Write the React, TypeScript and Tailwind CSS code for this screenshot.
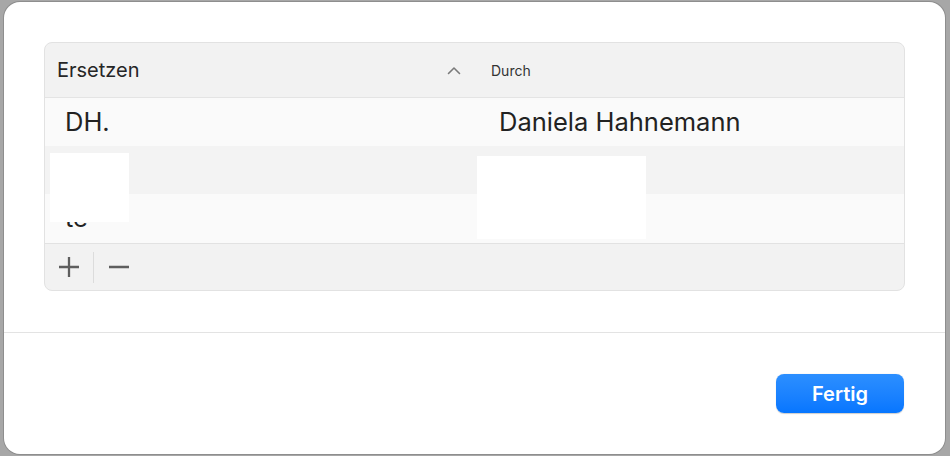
import React from 'react';

const rows = [
  { from: 'DH.', to: 'Daniela Hahnemann', shade: 'bg-[#fafafa]' },
  { from: '', to: '', shade: 'bg-[#f3f3f3]' },
  { from: 'te', to: '', shade: 'bg-[#fafafa]' },
];

export default function App() {
  return (
    <div
      className="w-[950px] h-[456px] bg-[#a7a7a7] overflow-hidden pl-[4px] pt-[2px]"
      style={{ fontFamily: 'Inter, "Noto Sans", sans-serif' }}
    >
      <div className="w-[941px] h-[452px] bg-white rounded-[16px] flex flex-col ring-1 ring-[#8e8e8e]">
        {/* table area */}
        <div className="px-[40px] pt-[40px] pb-[41px]">
          <div className="relative h-[249px] rounded-[8px] border border-[#e2e2e2] bg-[#f2f2f2] overflow-hidden flex flex-col">
            <div className="h-[55px] flex items-center border-b border-[#e4e4e4] text-[#262626]">
              <div className="w-[432px] pl-[12px] flex items-center justify-between pr-[16px]">
                <span className="text-[20px]">Ersetzen</span>
                <svg width="14" height="9" viewBox="0 0 14 9" fill="none" stroke="#7a7a7a" strokeWidth="1.6" strokeLinecap="round" strokeLinejoin="round">
                  <path d="M1.5 7.5 L7 2 L12.5 7.5" />
                </svg>
              </div>
              <span className="pl-[14px] text-[14px] text-[#333]">Durch</span>
            </div>
            {rows.map((r, i) => (
              <div
                key={i}
                className={`${r.shade} ${i === 2 ? 'h-[49px]' : 'h-[48px]'} flex items-center text-[25.5px] text-[#222]`}
              >
                <span className="w-[432px] pl-[20px]">{r.from}</span>
                <span className="pl-[22px]">{r.to}</span>
              </div>
            ))}
            <div className="flex-1 border-t border-[#e2e2e2] flex items-center">
              <div className="w-[48px] flex justify-center">
                <svg width="22" height="22" viewBox="0 0 22 22" stroke="#5e5e5e" strokeWidth="2.3">
                  <path d="M1 11 H21 M11 1 V21" />
                </svg>
              </div>
              <div className="w-px h-[31px] bg-[#dcdcdc]" />
              <div className="w-[49px] flex justify-center">
                <svg width="20" height="4" viewBox="0 0 20 4" stroke="#5e5e5e" strokeWidth="2.3">
                  <path d="M0 2 H20" />
                </svg>
              </div>
            </div>
            {/* redaction boxes */}
            <div className="absolute left-[5px] top-[110px] w-[79px] h-[69px] bg-white" />
            <div className="absolute left-[432px] top-[113px] w-[169px] h-[83px] bg-white" />
          </div>
        </div>
        <div className="h-px bg-[#e3e3e3]" />
        <div className="flex-1 flex justify-end items-start pt-[41px] pr-[41px]">
          <button className="w-[128px] h-[39px] rounded-[8px] bg-gradient-to-b from-[#2c8fff] to-[#0676ff] text-white text-[20px] font-semibold shadow-[0_0.5px_1px_rgba(0,0,0,0.2)]">
            Fertig
          </button>
        </div>
      </div>
    </div>
  );
}
